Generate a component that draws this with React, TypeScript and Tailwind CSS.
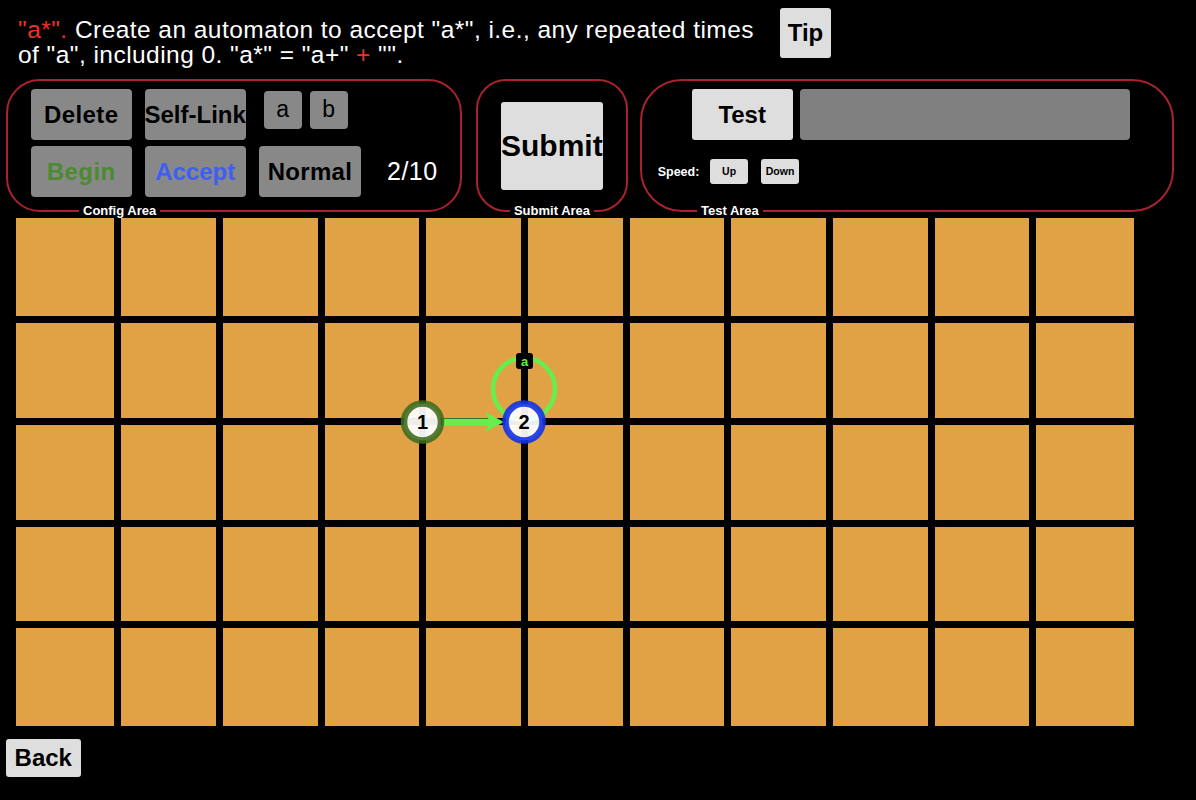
import React from 'react';

const GREEN = '#66ee4c';

const GrayButton = ({ className = '', children }: { className?: string; children: React.ReactNode }) => (
  <div className={`flex items-center justify-center whitespace-nowrap rounded-[4px] bg-[#888888] ${className}`}>
    {children}
  </div>
);

const LightButton = ({ className = '', children }: { className?: string; children: React.ReactNode }) => (
  <div className={`flex items-center justify-center whitespace-nowrap rounded-[3px] bg-[#dedede] font-bold text-black ${className}`}>
    {children}
  </div>
);

const AreaLabel = ({ className = '', children }: { className?: string; children: React.ReactNode }) => (
  <div
    className={`absolute -bottom-[9px] h-[17px] whitespace-nowrap rounded-[6px] bg-black px-[4px] text-[13px] font-bold leading-[17px] text-white ${className}`}
  >
    {children}
  </div>
);

// nodes and links drawn on top of the board
const Automaton = () => (
  <svg
    className="pointer-events-none absolute left-0 top-0 overflow-visible"
    width={1118}
    height={508}
    fontFamily="'Liberation Sans', Arial, sans-serif"
  >
    {/* self link on state 2 */}
    <circle cx={508} cy={171} r={31} fill="none" stroke={GREEN} strokeWidth={4.5} />
    <rect x={500} y={135} width={17} height={16} rx={3} fill="#000" />
    <text x={508.5} y={147.5} textAnchor="middle" fontSize={13} fontWeight="bold" fill={GREEN}>
      a
    </text>

    {/* 1 -> 2 */}
    <line x1={426} y1={204} x2={474} y2={204} stroke={GREEN} strokeWidth={7} />
    <polygon points="469,194 488,204 469,214 474,204" fill={GREEN} />

    {/* state 1 (begin) */}
    <circle cx={406.5} cy={204} r={18.5} fill="#ffffff" fillOpacity={0.93} stroke="#3b6b1d" strokeOpacity={0.88} strokeWidth={6.5} />
    <text x={406.5} y={211} textAnchor="middle" fontSize={20} fontWeight="bold" fill="#000">
      1
    </text>

    {/* state 2 (accept) */}
    <circle cx={508} cy={204} r={18.5} fill="#ffffff" fillOpacity={0.93} stroke="#1232e6" strokeOpacity={0.9} strokeWidth={6.5} />
    <text x={508} y={211} textAnchor="middle" fontSize={20} fontWeight="bold" fill="#000">
      2
    </text>
  </svg>
);

export default function App() {
  const cells = Array.from({ length: 55 }, (_, i) => i);

  return (
    <div className="h-[800px] w-[1196px] overflow-hidden bg-black font-['Liberation_Sans',Arial,sans-serif] text-white">
      {/* task text */}
      <div className="flex h-[79px] items-start">
        <p className="ml-[18px] mt-[17px] w-[752px] text-[24.5px] leading-[25px] tracking-[0.45px]">
          <span className="text-[#e8332b]">"a*".</span> Create an automaton to accept "a*", i.e., any repeated times of "a",
          including 0. "a*" = "a+" <span className="text-[#e8332b]">+</span> "".
        </p>
        <LightButton className="ml-[10px] mt-[8px] h-[50px] w-[51px] text-[24px]">Tip</LightButton>
      </div>

      {/* control panels */}
      <div className="ml-[6px] flex h-[133px]">
        {/* Config Area */}
        <div className="relative h-full w-[456px] rounded-[34px] border-2 border-[#a8232d] pl-[22.7px] pt-[8px]">
          <div className="flex items-start">
            <GrayButton className="h-[51px] w-[101px] text-[24px] font-bold tracking-[0.4px] text-black">Delete</GrayButton>
            <GrayButton className="ml-[13px] h-[51px] w-[101px] text-[24px] font-bold text-black">Self-Link</GrayButton>
            <GrayButton className="ml-[18px] mt-[2.4px] h-[38px] w-[38px] pb-[3px] text-[23px] text-black">a</GrayButton>
            <GrayButton className="ml-[8px] mt-[2.4px] h-[38px] w-[38px] pb-[3px] text-[23px] text-black">b</GrayButton>
          </div>
          <div className="mt-[6.4px] flex items-center">
            <GrayButton className="h-[51px] w-[101px] text-[24px] font-bold tracking-[0.4px] text-[#4b8a2e]">Begin</GrayButton>
            <GrayButton className="ml-[13px] h-[51px] w-[101px] text-[24px] font-bold text-[#3d5ff5]">Accept</GrayButton>
            <GrayButton className="ml-[13.3px] h-[51px] w-[102px] text-[24px] font-bold tracking-[0.3px] text-black">Normal</GrayButton>
            <span className="ml-[26px] text-[25px] tracking-[0.5px]">2/10</span>
          </div>
          <AreaLabel className="left-[71px]">Config Area</AreaLabel>
        </div>

        {/* Submit Area */}
        <div className="relative ml-[14px] flex h-full w-[152px] items-center justify-center rounded-[30px] border-2 border-[#a8232d]">
          <LightButton className="h-[88px] w-[102px] justify-start! text-[30px]">Submit</LightButton>
          <AreaLabel className="left-1/2 -translate-x-1/2">Submit Area</AreaLabel>
        </div>

        {/* Test Area */}
        <div className="relative ml-[12px] h-full w-[534px] rounded-[42px] border-2 border-[#a8232d] pl-[15.7px] pt-[8.3px]">
          <div className="ml-[34px] flex">
            <LightButton className="h-[51px] w-[101px] text-[24px]">Test</LightButton>
            <div className="ml-[7px] h-[51px] w-[330px] rounded-[4px] bg-[#808080]" />
          </div>
          <div className="mt-[19px] flex items-center">
            <span className="pt-[2px] text-[12.5px] font-bold">Speed:</span>
            <LightButton className="ml-[10.7px] h-[25px] w-[38px] text-[10.5px]">Up</LightButton>
            <LightButton className="ml-[13px] h-[25px] w-[38px] text-[10.5px]">Down</LightButton>
          </div>
          <AreaLabel className="left-[55px]">Test Area</AreaLabel>
        </div>
      </div>

      {/* board */}
      <div className="relative ml-[16.3px] mt-[6.3px] w-fit">
        <div className="grid grid-cols-[98px_repeat(9,94.7px)_98px] grid-rows-[98px_repeat(3,94.7px)_98px] gap-[7px]">
          {cells.map((i) => (
            <div key={i} className="bg-[#e0a245]" />
          ))}
        </div>
        <Automaton />
      </div>

      <LightButton className="ml-[5.5px] mt-[12.5px] h-[38px] w-[75.5px] text-[24px]">Back</LightButton>
    </div>
  );
}
